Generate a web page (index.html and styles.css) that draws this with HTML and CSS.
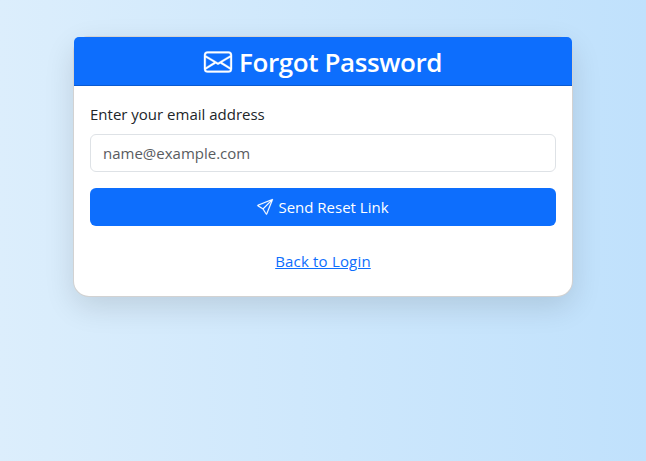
FILE: index.html
```html
<!DOCTYPE html>
<html lang="en">
<head>
<meta charset="utf-8">
<title>Forgot Password</title>
<link rel="stylesheet" href="styles.css">
</head>
<body>
<main class="card">
  <header class="card-header">
    <h3 class="title"><svg class="icon" viewBox="0 0 16 16" fill="currentColor"><path d="M0 4a2 2 0 0 1 2-2h12a2 2 0 0 1 2 2v8a2 2 0 0 1-2 2H2a2 2 0 0 1-2-2zm2-1a1 1 0 0 0-1 1v.217l7 4.2 7-4.2V4a1 1 0 0 0-1-1zm13 2.383-4.708 2.825L15 11.105zm-.034 6.876-5.64-3.471L8 9.583l-1.326-.795-5.64 3.47A1 1 0 0 0 2 13h12a1 1 0 0 0 .966-.741M1 11.105l4.708-2.897L1 5.383z"/></svg><span class="title-text">Forgot Password</span></h3>
  </header>
  <form class="card-body">
    <label class="label" for="email"><span class="label-text">Enter your email address</span></label>
    <input class="input" id="email" type="email" placeholder="name@example.com">
    <button class="button" type="button"><svg class="icon" viewBox="0 0 16 16" fill="currentColor"><path d="M15.854.146a.5.5 0 0 1 .11.54l-5.819 14.547a.75.75 0 0 1-1.329.124l-3.178-4.995L.643 7.184a.75.75 0 0 1 .124-1.33L15.314.037a.5.5 0 0 1 .54.11ZM6.636 10.07l2.761 4.338L14.13 2.576zm6.787-8.201L1.591 6.602l4.339 2.76z"/></svg><span class="button-text">Send Reset Link</span></button>
    <a class="link" href="#">Back to Login</a>
  </form>
</main>
</body>
</html>
```

FILE: styles.css
```css
* { box-sizing: border-box; }
body {
  margin: 0;
  min-height: 100vh;
  padding-top: 36px;
  background: linear-gradient(to right, #dceefc, #c0e1fc);
  font: 15px/24px "Open Sans", "Noto Sans", sans-serif;
  color: #212529;
}
.card {
  width: 500px;
  height: 261px;
  margin: 0 auto;
  background: #fff;
  border: 1px solid rgba(0, 0, 0, .175);
  border-radius: 16px;
  box-shadow: 0 10px 30px rgba(0, 0, 0, .12);
}
.card-header {
  height: 49px;
  padding: 8px 16px;
  background: #0d6efd;
  border-bottom: 1px solid rgba(0, 0, 0, .175);
  border-radius: 5px 5px 0 0;
  color: #fff;
}
.title {
  display: flex;
  justify-content: center;
  gap: 7px;
  margin: 0;
  font-size: 26px;
  line-height: 34px;
  font-weight: 600;
}
.title-text { letter-spacing: -.41px; }
.icon {
  width: 16px;
  height: 16px;
  flex: none;
  overflow: visible;
  stroke: currentColor;
  stroke-width: .2;
}
.title .icon { width: 28px; height: 28px; margin-top: 3px; }
.card-body { padding: 16px; }
.label { display: block; margin-bottom: 8px; }
.input {
  display: block;
  width: 100%;
  height: 38px;
  padding: 6px 12px;
  border: 1px solid #dee2e6;
  border-radius: 6px;
  font: inherit;
}
.input::placeholder { color: #595c5f; opacity: 1; }
.button {
  display: flex;
  align-items: center;
  justify-content: center;
  gap: 5px;
  width: 100%;
  height: 38px;
  margin-top: 16px;
  border: 0;
  border-radius: 6px;
  background: #0d6efd;
  color: #fff;
  font: inherit;
}
.link {
  display: block;
  width: max-content;
  margin: 23px auto 0;
  color: #0d6efd;
  letter-spacing: .18px;
}
```
